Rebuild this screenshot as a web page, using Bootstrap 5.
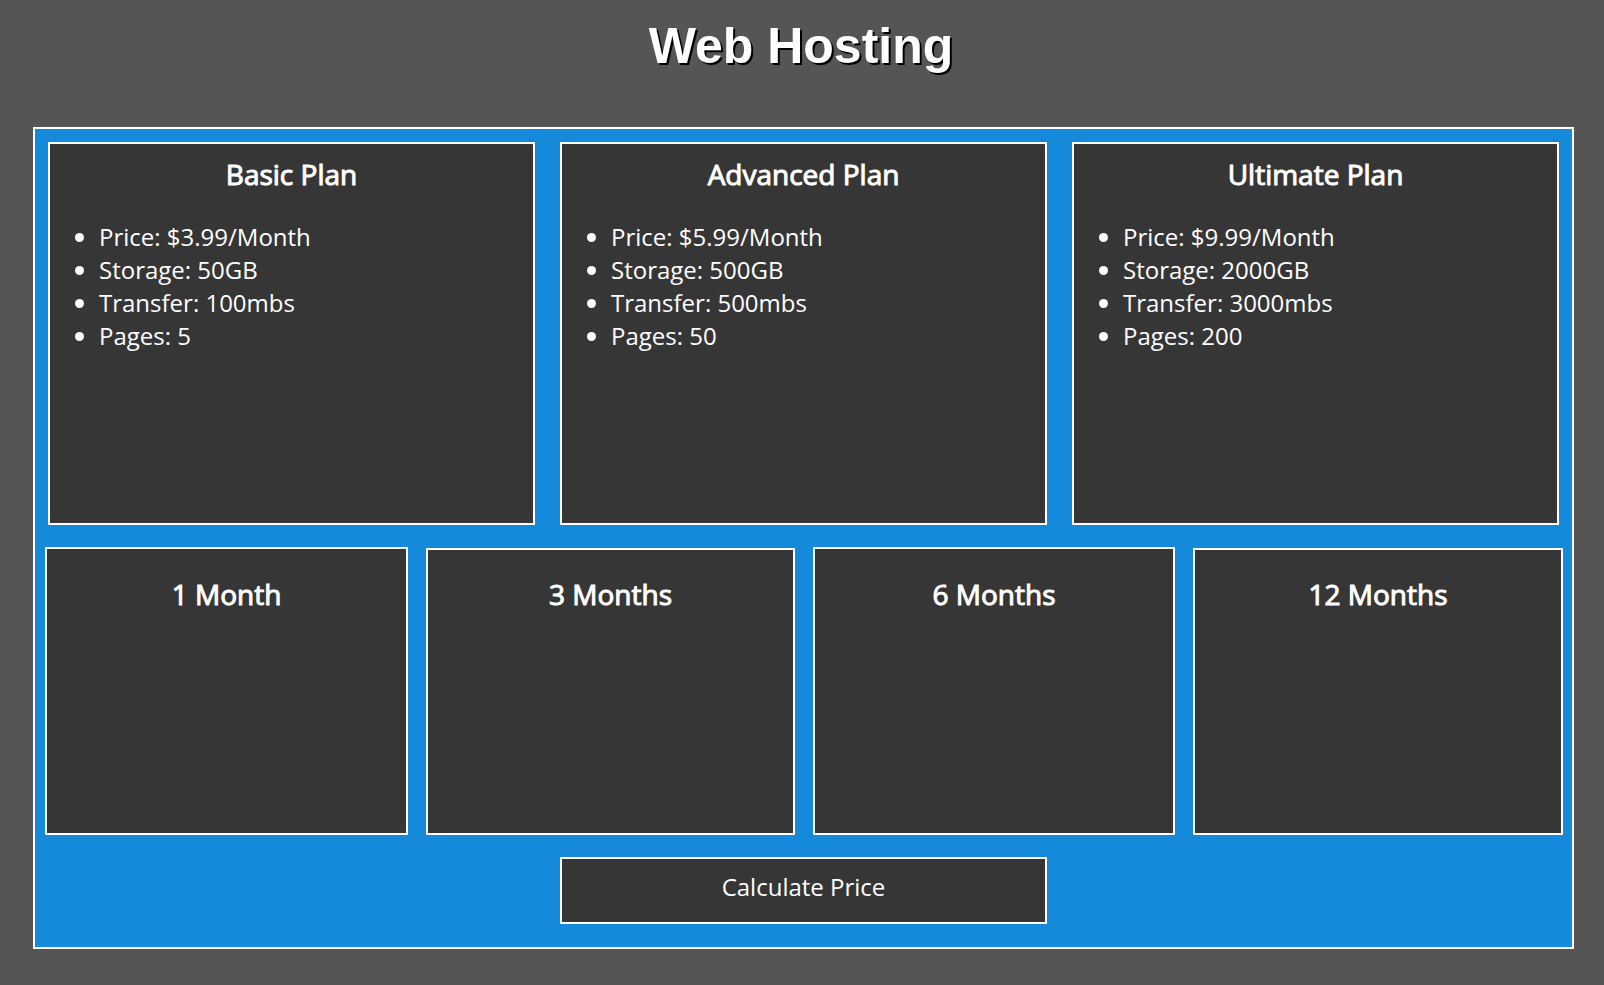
<!DOCTYPE html>
<html lang="en">
<head>
<meta charset="utf-8">
<meta name="viewport" content="width=device-width, initial-scale=1">
<title>Web Hosting</title>
<link rel="stylesheet" href="https://cdn.jsdelivr.net/npm/bootstrap@5.3.0/dist/css/bootstrap.min.css">
<style>
  body { background: #555; color: #fff; font-family: "Open Sans", sans-serif; font-size: 24px; line-height: 33px; }
  .page-title { font: bold 50px/58px "Liberation Sans", Arial, sans-serif; text-shadow: 2px 2px #000; padding: 17px 2px 0 0; margin-bottom: 52px; }
  .hosting { background: #168ada; border: 2px solid #fff; margin: 0 30px 36px 33px; padding: 13px 9px 23px 10px; }
  .box { background: #363636; border: 2px solid #fff; color: #fff; }
  .box-title { font-size: 28px; line-height: 38px; font-weight: 400; -webkit-text-stroke: 1px #fff; margin: 0; text-align: center; }
  .plans { grid-template-columns: repeat(3, 1fr); gap: 25px; padding: 0 4px 0 3px; margin-bottom: 22px; }
  .plan { min-height: 383px; padding-top: 11px; }
  .plan ul { margin: 27px 0 0; padding-left: 49px; }
  .terms { grid-template-columns: 363fr 369fr 362fr 370fr; gap: 18px; align-items: end; margin-bottom: 22px; }
  .term { min-height: 287px; padding-top: 25px; }
  .term:nth-child(odd) { min-height: 288px; padding-top: 26px; }
  .calc { grid-column: 2; font: inherit; min-height: 67px; padding: 0 0 8px; }
</style>
</head>
<body>
<h1 class="page-title text-center">Web Hosting</h1>
<main class="hosting">
  <div class="plans d-grid">
    <section class="box plan">
      <h2 class="box-title">Basic Plan</h2>
      <ul><li>Price: $3.99/Month</li><li>Storage: 50GB</li><li>Transfer: 100mbs</li><li>Pages: 5</li></ul>
    </section>
    <section class="box plan">
      <h2 class="box-title">Advanced Plan</h2>
      <ul><li>Price: $5.99/Month</li><li>Storage: 500GB</li><li>Transfer: 500mbs</li><li>Pages: 50</li></ul>
    </section>
    <section class="box plan">
      <h2 class="box-title">Ultimate Plan</h2>
      <ul><li>Price: $9.99/Month</li><li>Storage: 2000GB</li><li>Transfer: 3000mbs</li><li>Pages: 200</li></ul>
    </section>
  </div>
  <div class="terms d-grid">
    <section class="box term"><h2 class="box-title">1 Month</h2></section>
    <section class="box term"><h2 class="box-title">3 Months</h2></section>
    <section class="box term"><h2 class="box-title">6 Months</h2></section>
    <section class="box term"><h2 class="box-title">12 Months</h2></section>
  </div>
  <div class="plans d-grid mb-0">
    <button type="button" class="box calc">Calculate Price</button>
  </div>
</main>
<script src="https://cdn.jsdelivr.net/npm/bootstrap@5.3.0/dist/js/bootstrap.bundle.min.js"></script>
</body>
</html>
